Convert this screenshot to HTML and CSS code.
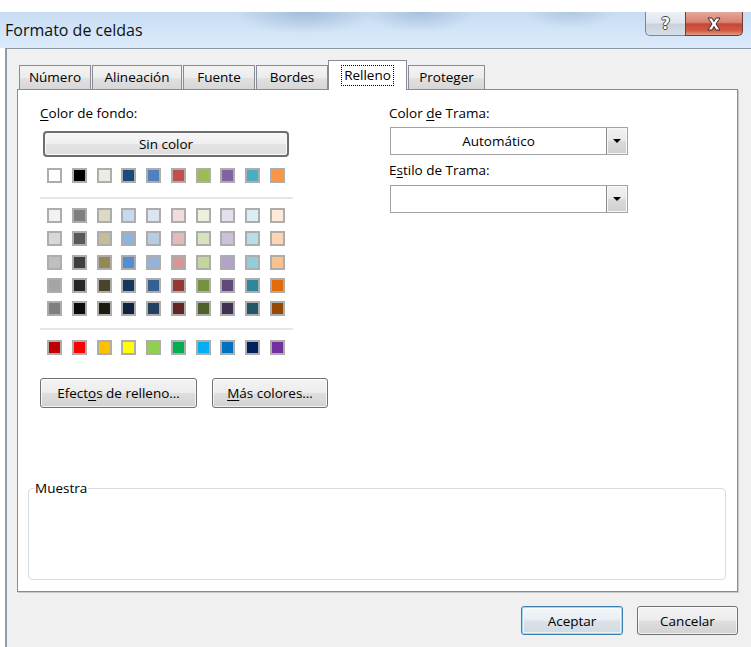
FILE: index.html
```html
<!DOCTYPE html>
<html lang="es">
<head>
<meta charset="utf-8">
<title>Formato de celdas</title>
<link rel="stylesheet" href="styles.css">
</head>
<body>
<div class="window">
  <header class="titlebar">
    <span class="title">Formato de celdas</span>
    <div class="caption">
      <span class="cap-btn help">?</span>
      <span class="cap-btn close"><svg width="16" height="14" viewBox="0 0 16 14"><path d="M2 1H6L8 4.5L10 1H14L10 7L14 13H10L8 9.5L6 13H2L6 7Z" fill="#fff" stroke="#3b2b2b" stroke-width="1"/></svg></span>
    </div>
  </header>
  <main class="dialog">
    <nav class="tabs">
      <span class="tab">Número</span>
      <span class="tab wide">Alineación</span>
      <span class="tab">Fuente</span>
      <span class="tab">Bordes</span>
      <span class="tab active"><span class="focus">Relleno</span></span>
      <span class="tab last">Proteger</span>
    </nav>
    <section class="panel">
      <div class="cols">
        <div class="left">
          <div class="label"><u>C</u>olor de fondo:</div>
          <button class="btn nocolor">Sin color</button>
          <div class="swatches first">
            <span class="sw" style="background:#ffffff"></span>
            <span class="sw" style="background:#000000"></span>
            <span class="sw" style="background:#eeece1"></span>
            <span class="sw" style="background:#1f497d"></span>
            <span class="sw" style="background:#4f81bd"></span>
            <span class="sw" style="background:#c0504d"></span>
            <span class="sw" style="background:#9bbb59"></span>
            <span class="sw" style="background:#8064a2"></span>
            <span class="sw" style="background:#4bacc6"></span>
            <span class="sw" style="background:#f79646"></span>
          </div>
          <div class="sep"></div>
          <div class="shades">
            <div class="swatches">
              <span class="sw" style="background:#f2f2f2"></span>
              <span class="sw" style="background:#7f7f7f"></span>
              <span class="sw" style="background:#ddd9c3"></span>
              <span class="sw" style="background:#c6d9f0"></span>
              <span class="sw" style="background:#dbe5f1"></span>
              <span class="sw" style="background:#f2dcdb"></span>
              <span class="sw" style="background:#ebf1dd"></span>
              <span class="sw" style="background:#e5e0ec"></span>
              <span class="sw" style="background:#dbeef3"></span>
              <span class="sw" style="background:#fdeada"></span>
            </div>
            <div class="swatches">
              <span class="sw" style="background:#d8d8d8"></span>
              <span class="sw" style="background:#595959"></span>
              <span class="sw" style="background:#c4bd97"></span>
              <span class="sw" style="background:#8db3e2"></span>
              <span class="sw" style="background:#b8cce4"></span>
              <span class="sw" style="background:#e5b9b7"></span>
              <span class="sw" style="background:#d7e3bc"></span>
              <span class="sw" style="background:#ccc1d9"></span>
              <span class="sw" style="background:#b7dde8"></span>
              <span class="sw" style="background:#fbd5b5"></span>
            </div>
            <div class="swatches">
              <span class="sw" style="background:#bfbfbf"></span>
              <span class="sw" style="background:#3f3f3f"></span>
              <span class="sw" style="background:#938953"></span>
              <span class="sw" style="background:#548dd4"></span>
              <span class="sw" style="background:#95b3d7"></span>
              <span class="sw" style="background:#d99694"></span>
              <span class="sw" style="background:#c3d69b"></span>
              <span class="sw" style="background:#b2a2c7"></span>
              <span class="sw" style="background:#92cddc"></span>
              <span class="sw" style="background:#fac08f"></span>
            </div>
            <div class="swatches">
              <span class="sw" style="background:#a5a5a5"></span>
              <span class="sw" style="background:#262626"></span>
              <span class="sw" style="background:#494429"></span>
              <span class="sw" style="background:#17365d"></span>
              <span class="sw" style="background:#366092"></span>
              <span class="sw" style="background:#953734"></span>
              <span class="sw" style="background:#76923c"></span>
              <span class="sw" style="background:#5f497a"></span>
              <span class="sw" style="background:#31859b"></span>
              <span class="sw" style="background:#e36c09"></span>
            </div>
            <div class="swatches">
              <span class="sw" style="background:#7f7f7f"></span>
              <span class="sw" style="background:#0c0c0c"></span>
              <span class="sw" style="background:#1d1b10"></span>
              <span class="sw" style="background:#0f243e"></span>
              <span class="sw" style="background:#244061"></span>
              <span class="sw" style="background:#632423"></span>
              <span class="sw" style="background:#4f6128"></span>
              <span class="sw" style="background:#3f3151"></span>
              <span class="sw" style="background:#205867"></span>
              <span class="sw" style="background:#974806"></span>
            </div>
          </div>
          <div class="sep sep2"></div>
          <div class="swatches standard">
            <span class="sw" style="background:#c00000"></span>
            <span class="sw" style="background:#ff0000"></span>
            <span class="sw" style="background:#ffc000"></span>
            <span class="sw" style="background:#ffff00"></span>
            <span class="sw" style="background:#92d050"></span>
            <span class="sw" style="background:#00b050"></span>
            <span class="sw" style="background:#00b0f0"></span>
            <span class="sw" style="background:#0070c0"></span>
            <span class="sw" style="background:#002060"></span>
            <span class="sw" style="background:#7030a0"></span>
          </div>
          <div class="actions">
            <button class="btn effects">Efect<u>o</u>s de relleno…</button>
            <button class="btn more"><u>M</u>ás colores…</button>
          </div>
        </div>
        <div class="right">
          <div class="label">Color <u>d</u>e Trama:</div>
          <div class="combo">
            <span class="combo-value">Automático</span>
            <span class="combo-arrow"><span class="tri"></span></span>
          </div>
          <div class="label label2">E<u>s</u>tilo de Trama:</div>
          <div class="combo">
            <span class="combo-value"></span>
            <span class="combo-arrow"><span class="tri"></span></span>
          </div>
        </div>
      </div>
      <fieldset class="sample">
        <legend>Muestra</legend>
        <div class="sample-area"></div>
      </fieldset>
    </section>
    <footer class="footer">
      <button class="btn default">Aceptar</button>
      <button class="btn">Cancelar</button>
    </footer>
  </main>
</div>
</body>
</html>
```
FILE: styles.css
```css
* { box-sizing: border-box; }

html, body {
  margin: 0;
  padding: 0;
}

body {
  width: 751px;
  height: 647px;
  overflow: hidden;
  background: #ffffff;
  font-family: "Open Sans", "Noto Sans", sans-serif;
  font-size: 13.5px;
  color: #000;
}

u { text-underline-offset: 2px; }

.window {
  height: 647px;
  padding-top: 12px;
  display: flex;
  flex-direction: column;
}

/* ---------- title bar ---------- */
.titlebar {
  height: 36px;
  flex: none;
  display: flex;
  justify-content: space-between;
  align-items: flex-start;
  background:
    radial-gradient(ellipse 70px 22px at 305px 0, rgba(110, 140, 180, .40), rgba(110, 140, 180, 0)),
    radial-gradient(ellipse 55px 20px at 420px 0, rgba(110, 140, 180, .35), rgba(110, 140, 180, 0)),
    radial-gradient(ellipse 45px 16px at 570px 0, rgba(120, 150, 185, .30), rgba(120, 150, 185, 0)),
    linear-gradient(#c7dcf2, #d4e6f8 60%, #dbeafa);
}

.title {
  font-size: 16px;
  line-height: 36px;
  padding-left: 5px;
  color: #111;
}

.caption {
  display: flex;
  margin-right: 8px;
}

.cap-btn {
  height: 24px;
  display: flex;
  align-items: center;
  justify-content: center;
}

.help {
  width: 40px;
  border: 1px solid #7d8794;
  border-top: 0;
  border-right: 0;
  border-radius: 0 0 0 5px;
  background: linear-gradient(#eef2f6, #dfe5ec 48%, #c9d2dc 52%, #d6dee7);
  font-family: "DejaVu Sans", sans-serif;
  font-weight: bold;
  font-size: 15px;
  color: #fff;
  text-shadow: 1px 0 0 #3c4652, -1px 0 0 #3c4652, 0 1px 0 #3c4652, 0 -1px 0 #3c4652;
}

.close {
  width: 58px;
  border: 1px solid #6e3c36;
  border-top: 0;
  border-radius: 0 0 5px 0;
  background: linear-gradient(#e6a79b, #d88270 45%, #c54733 52%, #cf5a43 80%, #e09a88);
}

/* ---------- dialog body ---------- */
.dialog {
  flex: 1;
  margin-left: 5px;
  border-left: 2px solid #8e9cab;
  border-top: 1px solid #8d97a2;
  background: #f0f0f0;
  padding: 11px 0 0 10px;
}

.tabs {
  position: relative;
  z-index: 1;
  height: 30px;
  margin-bottom: -1px;
  padding-left: 2px;
  display: flex;
  align-items: flex-end;
  gap: 1px;
}

.tab {
  flex: none;
  width: 72px;
  height: 24px;
  margin-bottom: 1px;
  border: 1px solid #898c95;
  border-bottom: 0;
  background: linear-gradient(#f3f3f3, #ececec 50%, #e0e0e0 55%, #d7d7d7);
  line-height: 22px;
  text-align: center;
  white-space: nowrap;
}

.tab.wide { width: 90px; }
.tab.last { width: 77px; }

.tab.active {
  width: 79px;
  height: 30px;
  margin: 0 0 0 -1px;
  padding-top: 4px;
  background: #fff;
  display: flex;
  align-items: flex-start;
  justify-content: center;
}

.focus {
  display: block;
  border: 1px dotted #000;
  padding: 0 2px;
  line-height: 19px;
}

.panel {
  width: 721px;
  height: 503px;
  background: #fff;
  border: 1px solid #898c95;
  box-shadow: 1px 1px 0 #c8c8c8;
  display: flex;
  flex-direction: column;
  padding: 14px 11px 11px 10px;
}

.cols {
  display: flex;
  gap: 96px;
  padding-left: 12px;
}

.label {
  line-height: 18px;
  height: 18px;
  white-space: nowrap;
}

.left {
  width: 253px;
  flex: none;
  display: flex;
  flex-direction: column;
}

.btn {
  font: inherit;
  color: #000;
  padding: 0;
  border: 1px solid #707070;
  border-radius: 3px;
  background: linear-gradient(#f4f4f4, #ececec 48%, #dedede 52%, #d2d2d2);
  box-shadow: inset 0 0 0 1px rgba(255, 255, 255, .7);
  white-space: nowrap;
}

.nocolor {
  margin: 9px 0 0 3px;
  width: 246px;
  height: 26px;
  border: 2px solid #6e6e6e;
  border-radius: 4px;
  background: linear-gradient(#f7f7f7, #efefef 50%, #e4e4e4 52%, #dedede);
  box-shadow: inset 0 0 0 1px #fafafa;
}

.swatches {
  display: flex;
  justify-content: space-between;
  padding: 0 8px 0 7px;
}

.swatches.first { margin-top: 11px; }

.sw {
  width: 15px;
  height: 15px;
  border: 2px solid #adadad;
}

.sep {
  height: 2px;
  background: #e6e6e6;
  margin-top: 14px;
}

.shades {
  margin-top: 9px;
  display: grid;
  row-gap: 8.33px;
}

.sep2 { margin-top: 12px; }

.swatches.standard { margin-top: 10px; }

.actions {
  margin-top: 23px;
  display: flex;
  gap: 15px;
}

.effects { flex: none; width: 157px; height: 30px; }
.more { flex: none; width: 116px; height: 30px; }

.right {
  width: 239px;
  flex: none;
  display: flex;
  flex-direction: column;
}

.combo {
  margin: 5px 0 0 1px;
  width: 238px;
  height: 28px;
  border: 1px solid #a3a3a3;
  background: #fff;
  display: flex;
}

.label2 { margin-top: 6px; }
.label2 + .combo { margin-top: 6px; }

.combo-value {
  flex: 1;
  text-align: center;
  line-height: 26px;
}

.combo-arrow {
  width: 21px;
  border-left: 1px solid #8a8a8a;
  background: linear-gradient(#f2f2f2, #e8e8e8 50%, #dadada 52%, #d0d0d0);
  box-shadow: inset 0 0 0 1px #f8f8f8;
  display: flex;
  align-items: center;
  justify-content: center;
}

.tri {
  width: 0;
  height: 0;
  border-left: 4px solid transparent;
  border-right: 4px solid transparent;
  border-top: 4px solid #000;
}

.sample {
  margin: auto 0 0 0;
  padding: 0;
  border: 1px solid #d5dde4;
  border-radius: 4px;
  min-width: 0;
}

.sample legend {
  margin-left: 5px;
  padding: 0 1px;
  line-height: 18px;
}

.sample-area { height: 82px; }

.footer {
  width: 721px;
  margin-top: 14px;
  display: flex;
  justify-content: flex-end;
  gap: 14px;
}

.footer .btn {
  width: 101px;
  height: 29px;
}

.footer .default {
  width: 102px;
  border-color: #3c7fb1;
  box-shadow: inset 0 0 0 1px #9fd6f2, inset 0 0 0 2px rgba(255, 255, 255, .6);
  background: linear-gradient(#f3f7fa, #e9eef3 48%, #dbe2e9 52%, #d2dae2);
}
```
